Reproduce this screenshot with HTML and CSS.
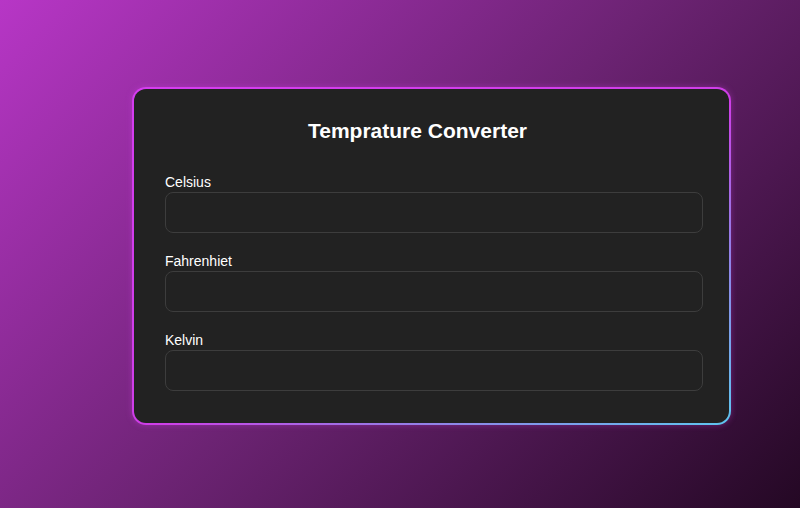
FILE: index.html
```html
<!DOCTYPE html>
<html lang="en">
<head>
<meta charset="utf-8">
<title>Temprature Converter</title>
<link rel="stylesheet" href="styles.css">
</head>
<body>
<div class="page">
  <div class="card">
    <h2 class="title">Temprature Converter</h2>
    <div class="field">
      <label class="label" for="c">Celsius</label>
      <input class="input" id="c" type="text">
    </div>
    <div class="field">
      <label class="label" for="f">Fahrenhiet</label>
      <input class="input" id="f" type="text">
    </div>
    <div class="field">
      <label class="label" for="k">Kelvin</label>
      <input class="input" id="k" type="text">
    </div>
  </div>
</div>
</body>
</html>
```
FILE: styles.css
```css
html, body {
  margin: 0;
  padding: 0;
}
body {
  font-family: "Liberation Sans", Arial, sans-serif;
  color: #fff;
}
.page {
  box-sizing: border-box;
  width: 100%;
  height: 508px;
  padding: 87px 0 0 132px;
  background: linear-gradient(135deg, #b736c6 0%, #6c2373 50%, #240824 100%);
}
.card {
  box-sizing: border-box;
  width: 599px;
  padding: 30px 25px 32px 31px;
  border: 2px solid transparent;
  border-radius: 14px;
  background:
    linear-gradient(#222, #222) padding-box,
    linear-gradient(to bottom right, #d53cf0 0%, #cf3ee8 52%, #a070e6 68%, #5ec6ef 100%) border-box;
  box-shadow: 0 0 6px rgba(210, 70, 230, 0.35);
}
.title {
  margin: 0 0 31px 0;
  padding-right: 34px;
  font-size: 21px;
  font-weight: bold;
  text-align: center;
  line-height: normal;
}
.field {
  display: flex;
  flex-direction: column;
  gap: 2px;
  margin-bottom: 20px;
}
.field:last-child {
  margin-bottom: 0;
}
.label {
  font-size: 14px;
  line-height: 16px;
  color: #fff;
}
.input {
  box-sizing: border-box;
  width: 538px;
  height: 41px;
  margin: 0;
  padding: 0 12px;
  border: 1px solid #3d3d3d;
  border-radius: 8px;
  background: #222;
  color: #fff;
  font-family: "Liberation Sans", Arial, sans-serif;
  font-size: 14px;
  outline: none;
}
```
